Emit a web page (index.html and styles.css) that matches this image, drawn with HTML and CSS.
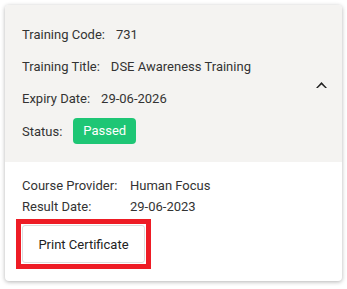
FILE: index.html
```html
<!DOCTYPE html>
<html lang="en">
<head>
    <meta charset="UTF-8">
    <meta name="viewport" content="width=device-width, initial-scale=1.0">
    <title>Training Record</title>
    <link rel="stylesheet" href="styles.css">
</head>
<body>
    <div class="card">
        <div class="card-head">
            <div class="details">
                <div class="row"><span class="label">Training Code:</span><span>731</span></div>
                <div class="row"><span class="label">Training Title:</span><span>DSE Awareness Training</span></div>
                <div class="row"><span class="label">Expiry Date:</span><span>29-06-2026</span></div>
                <div class="row status-row"><span class="label">Status:</span><span class="badge">Passed</span></div>
            </div>
            <!-- collapse toggle -->
            <svg class="chevron" width="11" height="6" viewBox="0 0 11 6">
                <path d="M0 6L5.5 0L11 6L9.2 6L5.5 2.4L1.8 6z" fill="#222"/>
            </svg>
        </div>

        <div class="card-body">
            <div class="info"><span class="info-label">Course Provider:</span><span>Human Focus</span></div>
            <div class="info"><span class="info-label">Result Date:</span><span>29-06-2023</span></div>
            <div class="highlight">
                <button type="button" class="print-btn">Print Certificate</button>
            </div>
        </div>
    </div>
</body>
</html>
```

FILE: styles.css
```css
body {
    margin: 0;
    background: #fff;
    font-family: Roboto, 'Liberation Sans', sans-serif;
    font-size: 13px;
    color: #333;
}

.card {
    margin: 5px;
    width: 337px;
    border-radius: 4px;
    overflow: hidden;
    background: #fff;
    box-shadow: 0 1px 4px rgba(0, 0, 0, 0.3);
}

.card-head {
    display: flex;
    align-items: center;
    justify-content: space-between;
    background: #f4f3f1;
    padding: 12px 15px 13px 17px;
    height: 132px;
}

.row {
    display: flex;
    align-items: center;
    height: 32px;
}

.status-row {
    height: 34px;
}

.label {
    margin-right: 11px;
}

.badge {
    background: #1ec675;
    color: #fff;
    border-radius: 4px;
    padding: 0 10px;
    height: 26px;
    line-height: 26px;
}

.chevron {
    margin-top: 4px;
}

.card-body {
    padding: 13px 17px 12px;
}

.info {
    display: flex;
    line-height: 21px;
}

.info-label {
    width: 108px;
}

.highlight {
    display: inline-block;
    margin: 2px 0 0 -6px;
    border: 5px solid #ee1c25;
    padding: 1px;
}

.print-btn {
    display: block;
    width: 123px;
    height: 38px;
    background: #fff;
    border: 1px solid #ddd;
    border-radius: 3px;
    font-family: Roboto, 'Liberation Sans', sans-serif;
    font-size: 13px;
    color: #222;
    cursor: pointer;
}
```
